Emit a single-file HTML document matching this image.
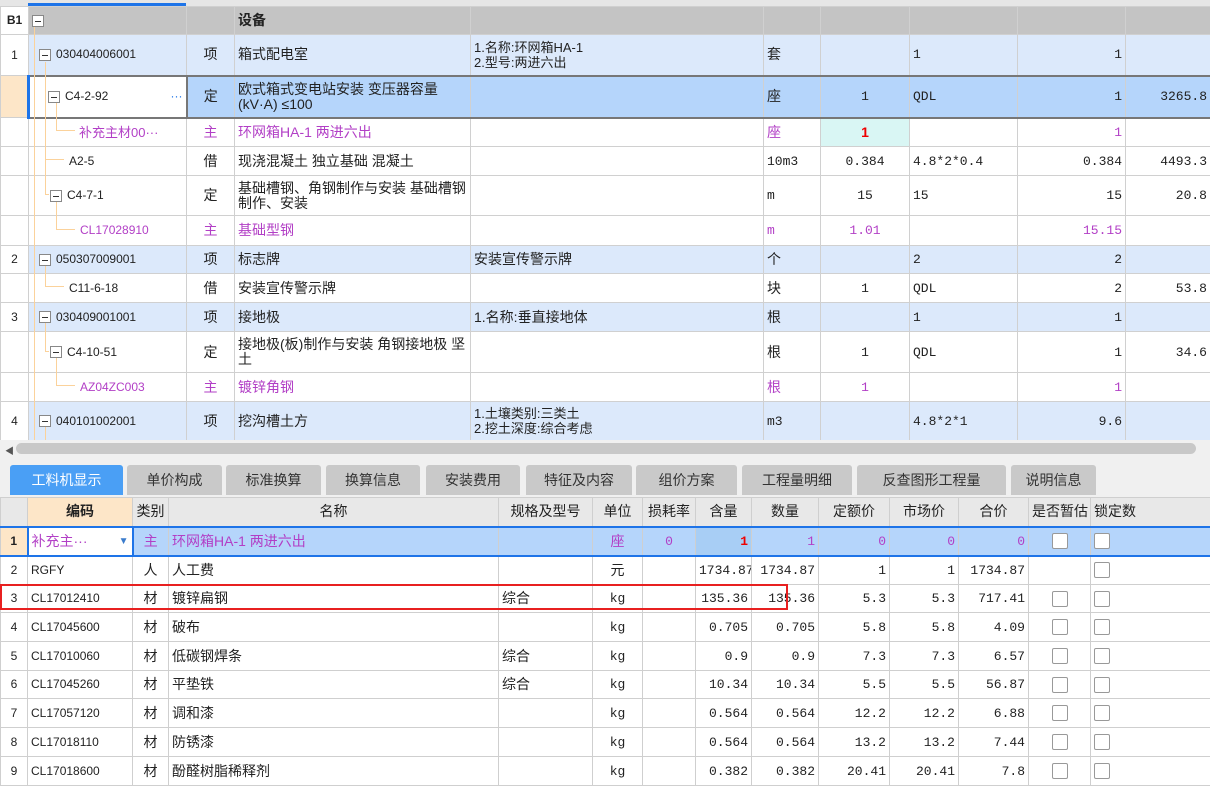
<!DOCTYPE html>
<html><head><meta charset="utf-8">
<style>
*{margin:0;padding:0;box-sizing:border-box}
body{width:1210px;height:775px;overflow:hidden;background:#fff;font-family:"Liberation Sans","Noto Sans CJK SC",sans-serif;font-size:14px;color:#222;position:relative}
table{border-collapse:collapse;table-layout:fixed;position:absolute;left:0}
td{border:1px solid #d0d0d0;overflow:hidden;white-space:nowrap;padding:0 3px;vertical-align:middle;line-height:15px}
.n{text-align:right}.c{text-align:center}
.m{font-family:"Liberation Mono","Noto Sans CJK SC",monospace;font-size:13px}
.k{font-size:12px}
.p{color:#b23fc6}
.it td{background:#dce9fb}
.it td.rn{background:#fff}
.rn{text-align:center;font-size:12px;background:#fff}
.wrap{white-space:normal}
.box{display:inline-block;width:12px;height:12px;border:1px solid #888;background:#fff;vertical-align:middle;position:relative;margin-right:5px}
.box:after{content:"";position:absolute;left:2px;top:5px;width:6px;height:1px;background:#333}
.cb{display:inline-block;width:16px;height:16px;border:1px solid #999;border-radius:2px;background:#fff;vertical-align:middle}
#tabs div{position:absolute;top:465px;height:30px;background:#c9c9c9;border-radius:3px 3px 0 0;text-align:center;line-height:30px;font-size:14px;color:#333}
#bt td{border-color:#cfcfcf}
.l{position:absolute;background:#fbd29b}
</style></head><body>
<div style="position:absolute;left:0;top:0;width:1210px;height:6px;background:#e6e6e6"></div>
<div style="position:absolute;left:28px;top:3px;width:158px;height:3px;background:#1e74e8"></div>
<table style="top:6px;width:1210px">
<colgroup><col style="width:28px"><col style="width:158px"><col style="width:48px"><col style="width:236px"><col style="width:293px"><col style="width:57px"><col style="width:89px"><col style="width:108px"><col style="width:108px"><col style="width:85px"></colgroup>
<tr style="height:28px;background:#c4c4c4"><td class="rn" style="font-weight:bold;background:#fff">B1</td><td><span class="box"></span></td><td></td><td style="font-weight:bold">设备</td><td></td><td></td><td></td><td></td><td></td><td></td></tr>
<tr class="it" style="height:41px"><td class="rn">1</td><td class="k" style="padding-left:10px"><span class="box"></span>030404006001</td><td class="c">项</td><td>箱式配电室</td><td class="wrap" style="font-size:13px">1.名称:环网箱HA-1<br>2.型号:两进六出</td><td>套</td><td></td><td class="m">1</td><td class="n m">1</td><td></td></tr>
<tr style="height:42px;background:#b5d5fb"><td style="background:#fde6c8"></td><td class="k" style="background:#fff;border:2px solid #777;border-left:3px solid #1e74e8;padding-left:18px"><span class="box"></span>C4-2-92<span style="float:right;color:#1e74e8">···</span></td><td class="c" style="border-top:2px solid #777;border-bottom:2px solid #777">定</td><td class="wrap" style="border-top:2px solid #777;border-bottom:2px solid #777">欧式箱式变电站安装 变压器容量(kV·A) ≤100</td><td style="border-top:2px solid #777;border-bottom:2px solid #777"></td><td style="border-top:2px solid #777;border-bottom:2px solid #777">座</td><td class="c m" style="border-top:2px solid #777;border-bottom:2px solid #777">1</td><td class="m" style="border-top:2px solid #777;border-bottom:2px solid #777">QDL</td><td class="n m" style="border-top:2px solid #777;border-bottom:2px solid #777">1</td><td class="n m" style="border-top:2px solid #777;border-bottom:2px solid #777">3265.8</td></tr>
<tr style="height:29px"><td></td><td class="p" style="padding-left:50px;font-size:13px">补充主材00···</td><td class="c p">主</td><td class="p">环网箱HA-1 两进六出</td><td></td><td class="p">座</td><td class="c" style="background:#d9f6f4;color:#e00;font-weight:bold">1</td><td></td><td class="n p m">1</td><td></td></tr>
<tr style="height:29px"><td></td><td class="k" style="padding-left:40px">A2-5</td><td class="c">借</td><td>现浇混凝土 独立基础 混凝土</td><td></td><td class="m">10m3</td><td class="c m">0.384</td><td class="m">4.8*2*0.4</td><td class="n m">0.384</td><td class="n m">4493.3</td></tr>
<tr style="height:40px"><td></td><td class="k" style="padding-left:21px"><span class="box"></span>C4-7-1</td><td class="c">定</td><td class="wrap">基础槽钢、角钢制作与安装 基础槽钢制作、安装</td><td></td><td class="m">m</td><td class="c m">15</td><td class="m">15</td><td class="n m">15</td><td class="n m">20.8</td></tr>
<tr style="height:30px"><td></td><td class="p k" style="padding-left:51px">CL17028910</td><td class="c p">主</td><td class="p">基础型钢</td><td></td><td class="p m">m</td><td class="c p m">1.01</td><td></td><td class="n p m">15.15</td><td></td></tr>
<tr class="it" style="height:28px"><td class="rn">2</td><td class="k" style="padding-left:10px"><span class="box"></span>050307009001</td><td class="c">项</td><td>标志牌</td><td>安装宣传警示牌</td><td>个</td><td></td><td class="m">2</td><td class="n m">2</td><td></td></tr>
<tr style="height:29px"><td></td><td class="k" style="padding-left:40px">C11-6-18</td><td class="c">借</td><td>安装宣传警示牌</td><td></td><td>块</td><td class="c m">1</td><td class="m">QDL</td><td class="n m">2</td><td class="n m">53.8</td></tr>
<tr class="it" style="height:29px"><td class="rn">3</td><td class="k" style="padding-left:10px"><span class="box"></span>030409001001</td><td class="c">项</td><td>接地极</td><td>1.名称:垂直接地体</td><td>根</td><td></td><td class="m">1</td><td class="n m">1</td><td></td></tr>
<tr style="height:41px"><td></td><td class="k" style="padding-left:21px"><span class="box"></span>C4-10-51</td><td class="c">定</td><td class="wrap">接地极(板)制作与安装 角钢接地极 坚土</td><td></td><td>根</td><td class="c m">1</td><td class="m">QDL</td><td class="n m">1</td><td class="n m">34.6</td></tr>
<tr style="height:29px"><td></td><td class="p k" style="padding-left:51px">AZ04ZC003</td><td class="c p">主</td><td class="p">镀锌角钢</td><td></td><td class="p">根</td><td class="c p m">1</td><td></td><td class="n p m">1</td><td></td></tr>
<tr class="it" style="height:39px"><td class="rn">4</td><td class="k" style="padding-left:10px"><span class="box"></span>040101002001</td><td class="c">项</td><td>挖沟槽土方</td><td class="wrap" style="font-size:13px">1.土壤类别:三类土<br>2.挖土深度:综合考虑</td><td class="m">m3</td><td></td><td class="m">4.8*2*1</td><td class="n m">9.6</td><td></td></tr>
</table>
<!-- tree lines -->
<div class="l" style="left:34px;top:27px;width:1px;height:413px"></div>
<div class="l" style="left:45px;top:62px;width:1px;height:133px"></div>
<div class="l" style="left:56px;top:103px;width:1px;height:27px"></div>
<div class="l" style="left:56px;top:130px;width:19px;height:1px"></div>
<div class="l" style="left:45px;top:159px;width:19px;height:1px"></div>
<div class="l" style="left:45px;top:194px;width:4px;height:1px"></div>
<div class="l" style="left:56px;top:202px;width:1px;height:27px"></div>
<div class="l" style="left:56px;top:229px;width:19px;height:1px"></div>
<div class="l" style="left:45px;top:266px;width:1px;height:21px"></div>
<div class="l" style="left:45px;top:286px;width:19px;height:1px"></div>
<div class="l" style="left:45px;top:323px;width:1px;height:28px"></div>
<div class="l" style="left:45px;top:351px;width:4px;height:1px"></div>
<div class="l" style="left:56px;top:358px;width:1px;height:27px"></div>
<div class="l" style="left:56px;top:385px;width:19px;height:1px"></div>
<div class="l" style="left:45px;top:427px;width:1px;height:13px"></div>
<!-- scrollbar -->
<div style="position:absolute;left:0;top:440px;width:1210px;height:18px;background:#f0f0f0"></div>
<div style="position:absolute;left:5px;top:444px;font-size:9px;color:#555">◀</div>
<div style="position:absolute;left:16px;top:443px;width:1180px;height:11px;background:#c8c8c8;border-radius:6px"></div>
<div style="position:absolute;left:0;top:458px;width:1210px;height:39px;background:#f0f0f0"></div>
<div id="tabs">
<div style="left:10px;width:113px;background:#4a9ff5;color:#fff">工料机显示</div>
<div style="left:127px;width:95px">单价构成</div>
<div style="left:226px;width:95px">标准换算</div>
<div style="left:326px;width:94px">换算信息</div>
<div style="left:426px;width:94px">安装费用</div>
<div style="left:526px;width:106px">特征及内容</div>
<div style="left:636px;width:101px">组价方案</div>
<div style="left:742px;width:110px">工程量明细</div>
<div style="left:857px;width:149px">反查图形工程量</div>
<div style="left:1011px;width:85px">说明信息</div>
</div>
<table id="bt" style="top:497px;width:1210px">
<colgroup><col style="width:27px"><col style="width:105px"><col style="width:36px"><col style="width:330px"><col style="width:94px"><col style="width:50px"><col style="width:53px"><col style="width:56px"><col style="width:67px"><col style="width:71px"><col style="width:69px"><col style="width:70px"><col style="width:62px"><col style="width:120px"></colgroup>
<tr style="height:29px;background:#e8e8e8"><td></td><td class="c" style="background:#fde6c8;font-weight:bold">编码</td><td class="c">类别</td><td class="c">名称</td><td class="c">规格及型号</td><td class="c">单位</td><td class="c">损耗率</td><td class="c">含量</td><td class="c">数量</td><td class="c">定额价</td><td class="c">市场价</td><td class="c">合价</td><td class="c">是否暂估</td><td>锁定数</td></tr>
<tr style="height:29px;background:#b5d5fb;border-top:2px solid #1e74e8;border-bottom:2px solid #1e74e8"><td class="rn" style="background:#fde6c8;font-weight:bold">1</td><td class="p" style="background:#fff;border:2px solid #1e74e8">补充主···<span style="float:right;color:#3b7ccc;font-size:10px">▼</span></td><td class="c p">主</td><td class="p">环网箱HA-1 两进六出</td><td></td><td class="c p">座</td><td class="c p m">0</td><td class="n m" style="color:#e00;font-weight:bold;background:#a8cef5">1</td><td class="n p m">1</td><td class="n p m">0</td><td class="n p m">0</td><td class="n p m">0</td><td class="c"><span class="cb"></span></td><td><span class="cb"></span></td></tr>
<tr style="height:29px"><td class="rn">2</td><td class="k">RGFY</td><td class="c">人</td><td>人工费</td><td></td><td class="c">元</td><td></td><td class="n m">1734.87</td><td class="n m">1734.87</td><td class="n m">1</td><td class="n m">1</td><td class="n m">1734.87</td><td></td><td><span class="cb"></span></td></tr>
<tr style="height:28px"><td class="rn">3</td><td class="k">CL17012410</td><td class="c">材</td><td>镀锌扁钢</td><td>综合</td><td class="c m">kg</td><td></td><td class="n m">135.36</td><td class="n m">135.36</td><td class="n m">5.3</td><td class="n m">5.3</td><td class="n m">717.41</td><td class="c"><span class="cb"></span></td><td><span class="cb"></span></td></tr>
<tr style="height:29px"><td class="rn">4</td><td class="k">CL17045600</td><td class="c">材</td><td>破布</td><td></td><td class="c m">kg</td><td></td><td class="n m">0.705</td><td class="n m">0.705</td><td class="n m">5.8</td><td class="n m">5.8</td><td class="n m">4.09</td><td class="c"><span class="cb"></span></td><td><span class="cb"></span></td></tr>
<tr style="height:29px"><td class="rn">5</td><td class="k">CL17010060</td><td class="c">材</td><td>低碳钢焊条</td><td>综合</td><td class="c m">kg</td><td></td><td class="n m">0.9</td><td class="n m">0.9</td><td class="n m">7.3</td><td class="n m">7.3</td><td class="n m">6.57</td><td class="c"><span class="cb"></span></td><td><span class="cb"></span></td></tr>
<tr style="height:28px"><td class="rn">6</td><td class="k">CL17045260</td><td class="c">材</td><td>平垫铁</td><td>综合</td><td class="c m">kg</td><td></td><td class="n m">10.34</td><td class="n m">10.34</td><td class="n m">5.5</td><td class="n m">5.5</td><td class="n m">56.87</td><td class="c"><span class="cb"></span></td><td><span class="cb"></span></td></tr>
<tr style="height:29px"><td class="rn">7</td><td class="k">CL17057120</td><td class="c">材</td><td>调和漆</td><td></td><td class="c m">kg</td><td></td><td class="n m">0.564</td><td class="n m">0.564</td><td class="n m">12.2</td><td class="n m">12.2</td><td class="n m">6.88</td><td class="c"><span class="cb"></span></td><td><span class="cb"></span></td></tr>
<tr style="height:29px"><td class="rn">8</td><td class="k">CL17018110</td><td class="c">材</td><td>防锈漆</td><td></td><td class="c m">kg</td><td></td><td class="n m">0.564</td><td class="n m">0.564</td><td class="n m">13.2</td><td class="n m">13.2</td><td class="n m">7.44</td><td class="c"><span class="cb"></span></td><td><span class="cb"></span></td></tr>
<tr style="height:29px"><td class="rn">9</td><td class="k">CL17018600</td><td class="c">材</td><td>酚醛树脂稀释剂</td><td></td><td class="c m">kg</td><td></td><td class="n m">0.382</td><td class="n m">0.382</td><td class="n m">20.41</td><td class="n m">20.41</td><td class="n m">7.8</td><td class="c"><span class="cb"></span></td><td><span class="cb"></span></td></tr>
</table>
<div style="position:absolute;left:0;top:584px;width:788px;height:26px;border:2px solid #e82020"></div>
</body></html>
